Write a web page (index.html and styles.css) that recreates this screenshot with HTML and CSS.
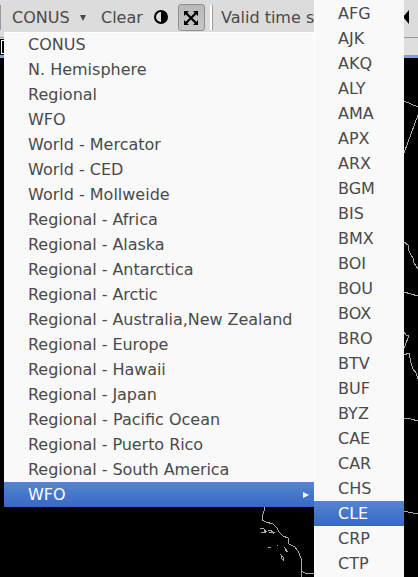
FILE: index.html
```html
<!DOCTYPE html>
<html lang="en">
<head>
<meta charset="utf-8">
<title>CONUS</title>
<link rel="stylesheet" href="styles.css">
</head>
<body>
<div class="toolbar">
  <span class="edge"></span>
  <span class="scale">CONUS</span>
  <svg class="caret" width="6" height="6" viewBox="0 0 6 6"><path d="M0 0H6L3 6Z"/></svg>
  <span class="clear">Clear</span>
  <svg class="contrast" width="14" height="14" viewBox="0 0 14 14"><circle cx="7" cy="7" r="6" fill="none" stroke="#000" stroke-width="2"/><path d="M7 1A6 6 0 0 1 7 13Z"/></svg>
  <span class="toggle"><svg width="14" height="14" viewBox="0 0 14 14"><path d="M0 0H5L0 5ZM14 0V5L9 0ZM0 14V9L5 14ZM14 14H9L14 9Z"/><path d="M2 2L12 12M12 2L2 12" stroke="#000" stroke-width="2.2"/></svg></span>
  <span class="divider"></span>
  <span class="time">Valid time seq</span>
  <svg class="back" width="6" height="14" viewBox="0 0 6 14"><path d="M6 0V14L0 7Z"/></svg>
</div>
<div class="tabs"><span class="tab-icon"></span></div>
<svg class="map" width="418" height="519" viewBox="0 58 418 519" shape-rendering="crispEdges">
  <path d="M264 507V511L263 514L262 520L266 522L273 524L277 528L279 532L283 536L288 538L289 544L295 547L298 551L301 558V577M301 571L305 573L314 574"/>
  <path d="M260 528L264 529L265 532H261M264 530L267 532M268 531L271 530L273 533L269 532M272 532L275 533M268 547H271M277 545H278M284 547L288 552L286 551L285 548M281 555L283 557V560L282 559Z"/>
  <path d="M404 101L418 107M418 115L404 153M404 242L408 245L409 251L411 255L413 258L414 263L418 269M404 292L418 296M418 285V289M404 332L406 335H409L405 346L404 348M404 355L409 353L411 363L413 369L416 373L418 379M404 418L411 419L418 421M404 511L408 512L418 514"/>
</svg>
<ul class="menu">
  <li>CONUS</li><li>N. Hemisphere</li><li>Regional</li><li>WFO</li><li>World - Mercator</li><li>World - CED</li><li>World - Mollweide</li><li class="region">Regional - Africa</li><li class="region">Regional - Alaska</li><li class="region">Regional - Antarctica</li><li class="region">Regional - Arctic</li><li class="region">Regional - Australia,New Zealand</li><li class="region">Regional - Europe</li><li class="region">Regional - Hawaii</li><li class="region">Regional - Japan</li><li>Regional - Pacific Ocean</li><li class="region">Regional - Puerto Rico</li><li class="region">Regional - South America</li>
  <li class="selected">WFO<svg width="6" height="6" viewBox="0 0 6 6"><path d="M0 0L6 3L0 6Z"/></svg></li>
</ul>
<ul class="menu submenu">
  <li>AFG</li><li>AJK</li><li>AKQ</li><li>ALY</li><li>AMA</li><li>APX</li><li>ARX</li><li>BGM</li><li>BIS</li><li>BMX</li><li>BOI</li><li>BOU</li><li>BOX</li><li>BRO</li><li>BTV</li><li>BUF</li><li>BYZ</li><li>CAE</li><li>CAR</li><li>CHS</li><li class="selected">CLE</li><li>CRP</li><li>CTP</li>
</ul>
</body>
</html>
```
FILE: styles.css
```css
* { box-sizing: border-box; }
body { margin: 0; width: 418px; height: 577px; overflow: hidden; background: #000; color: #4a4a4a; font: 16px/25px "DejaVu Sans", sans-serif; position: relative; }
.toolbar { height: 37px; display: flex; align-items: center; padding-bottom: 3px; background: #dcdcdc; white-space: nowrap; overflow: hidden; }
.toolbar > * { flex: none; }
.edge { width: 1px; height: 25px; background: #999; }
.scale { margin-left: 11px; width: 59px; }
.caret { margin: 2px 1px 0 9px; width: 6px; fill: #4a4a4a; }
.clear { margin-left: 14px; width: 43px; }
.contrast { margin-left: 10px; }
.toggle { margin-left: 10px; width: 27px; height: 27px; border: 1px solid #8f8f8f; border-radius: 3px; background: linear-gradient(#b9b9b9, #c6c6c6); display: flex; align-items: center; justify-content: center; }
.toggle svg { margin: 1px 2px 0 0; }
.divider { margin-left: 5px; width: 3px; height: 25px; border-right: 1px solid #999; background: #fff; }
.time { margin-left: 8px; width: 183px; }
.back { margin-left: -1px; }
.tabs { height: 21px; border-top: 1px solid #999; border-bottom: 2px solid #7b9fe0; background: #dedede; padding-top: 2px; box-shadow: inset 0 -1px #999; }
.tab-icon { display: block; width: 5px; height: 14px; margin-left: 1px; background: #000; border: 1px solid #fff; outline: 1px solid #000; }
.map { display: block; fill: none; stroke: #aaa; stroke-width: 1; }
.menu { position: absolute; left: 4px; top: 32px; width: 310px; margin: 0; padding: 0; list-style: none; background: #f9f9f9; box-shadow: inset 0 1px #fff; }
.menu li { height: 25px; padding: 0 5px 0 24px; display: flex; align-items: center; justify-content: space-between; white-space: nowrap; }
.menu .region { letter-spacing: -.05px; }
.menu .selected { color: #fff; fill: #fff; background: linear-gradient(#5585d0, #3868c5); }
.submenu { left: 314px; top: 0; width: 90px; height: 577px; padding-top: 1px; box-shadow: inset 1px 0 #fff; }
```
